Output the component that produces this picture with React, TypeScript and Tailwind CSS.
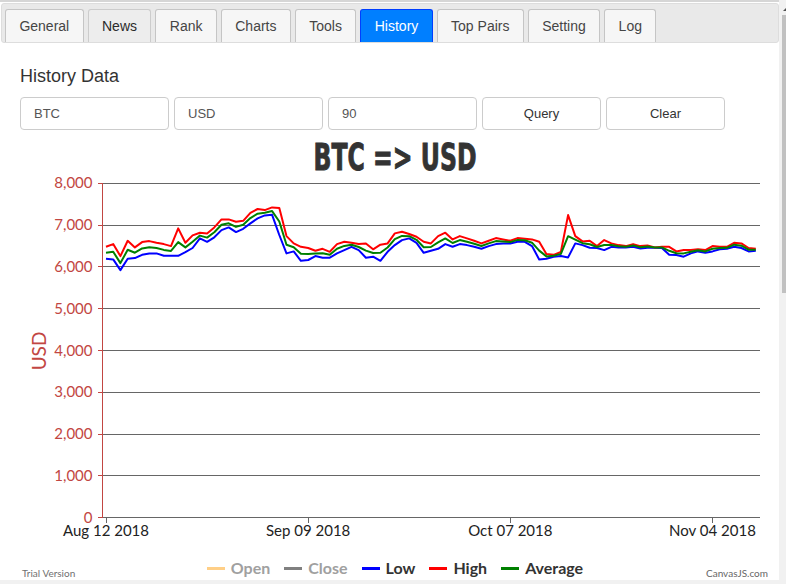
import React from "react";

const TABS = ["General", "News", "Rank", "Charts", "Tools", "History", "Top Pairs", "Setting", "Log"];
const ACTIVE = "History";
const HOVER = "News";

// daily high / low for the last 90 days (91 points)
const HIGH = [
  6482, 6546, 6259, 6625, 6467, 6594, 6618, 6577, 6546, 6498,
  6922, 6577, 6754, 6817, 6802, 6946, 7137, 7137, 7080, 7104,
  7295, 7384, 7360, 7424, 7407, 6738, 6563, 6482, 6451, 6386,
  6434, 6362, 6546, 6601, 6577, 6546, 6563, 6420,
  6530, 6563, 6802, 6841, 6786, 6721, 6601, 6563, 6738, 6817,
  6659, 6738, 6683, 6625, 6563, 6625, 6690, 6659, 6625, 6690,
  6673, 6659, 6601, 6307, 6290, 6362, 7240, 6738, 6611, 6625,
  6498, 6642, 6563, 6522, 6498, 6546, 6498, 6515, 6467, 6482,
  6482, 6371, 6403, 6403, 6420, 6403, 6498, 6482, 6482, 6577,
  6563, 6451, 6434,
];
const LOW = [
  6195, 6180, 5924, 6195, 6211, 6290, 6324, 6324, 6266, 6266,
  6266, 6355, 6451, 6683, 6601, 6707, 6881, 6946, 6833, 6912,
  7041, 7161, 7233, 7247, 6762, 6324, 6372, 6147, 6164, 6259,
  6219, 6219, 6324, 6403, 6482, 6403, 6219, 6243,
  6147, 6362, 6522, 6642, 6683, 6577, 6338, 6386, 6434, 6546,
  6482, 6546, 6522, 6482, 6434, 6498, 6546, 6563, 6563, 6601,
  6601, 6498, 6180, 6195, 6243, 6259, 6228, 6563, 6522, 6458,
  6451, 6403, 6482, 6467, 6467, 6482, 6443, 6458, 6458, 6451,
  6290, 6283, 6243, 6324, 6372, 6338, 6372, 6420, 6434, 6482,
  6451, 6372, 6386,
];
const AVG = HIGH.map((h, i) => Math.round((h + LOW[i]) / 2));

const X0 = 86;
const DX = 7.22;
const LEFT = 82.5;
const RIGHT = 740;
const gy = (v: number) => 381.7 - v * 0.0418;
const px = (i: number) => X0 + i * DX;
const linePath = (vals: number[]) =>
  vals.map((v, i) => `${i ? "L" : "M"}${px(i).toFixed(1)} ${gy(v).toFixed(1)}`).join(" ");

const Y_TICKS = [0, 1000, 2000, 3000, 4000, 5000, 6000, 7000, 8000];
const X_TICKS = [
  { i: 0, label: "Aug 12 2018" },
  { i: 28, label: "Sep 09 2018" },
  { i: 56, label: "Oct 07 2018" },
  { i: 84, label: "Nov 04 2018" },
];

const LEGEND = [
  { name: "Open", color: "#ffcf87", on: false },
  { name: "Close", color: "#808080", on: false },
  { name: "Low", color: "#0000ff", on: true },
  { name: "High", color: "#ff0000", on: true },
  { name: "Average", color: "#008000", on: true },
];

const AXIS_RED = "#c24642";
const CHART_FONT = "Lato, 'Open Sans', sans-serif";

function Tab({ label }: { label: string }) {
  const active = label === ACTIVE;
  const hover = label === HOVER;
  const cls = active
    ? "bg-[#007fff] border-[#003eff] text-white"
    : hover
    ? "bg-[#ededed] border-[#cccccc] text-[#2b2b2b]"
    : "bg-[#f6f6f6] border-[#c5c5c5] text-[#454545]";
  return (
    <div className={`h-[33px] px-[13.4px] flex items-center border border-b-0 rounded-t-[3px] text-[14px] ${cls}`}>
      {label}
    </div>
  );
}

function HistoryChart() {
  return (
    <div className="w-[750px] flex flex-col">
      <svg width={750} height={414} className="block">
        <text
          x={375}
          y={34}
          textAnchor="middle"
          fontFamily="'DejaVu Sans Condensed', 'DejaVu Sans', sans-serif"
          fontWeight="bold"
          fontSize={37}
          fill="#333333"
          stroke="#333333"
          strokeWidth={0.9}
          textLength={163}
          lengthAdjust="spacingAndGlyphs"
        >
          {"BTC => USD"}
        </text>

        {/* grid + y axis */}
        {Y_TICKS.map((v) => (
          <g key={v} shapeRendering="crispEdges">
            <line x1={LEFT} x2={RIGHT} y1={gy(v)} y2={gy(v)} stroke="#666666" strokeWidth={1} />
            <line x1={77.5} x2={LEFT} y1={gy(v)} y2={gy(v)} stroke={AXIS_RED} strokeWidth={1} />
            <text
              x={72.5}
              y={gy(v) + 5}
              textAnchor="end"
              fontFamily={CHART_FONT}
              fontSize={15}
              fill={AXIS_RED}
            >
              {v.toLocaleString("en-US")}
            </text>
          </g>
        ))}
        <line
          x1={LEFT}
          x2={LEFT}
          y1={gy(8000)}
          y2={gy(0)}
          stroke={AXIS_RED}
          strokeWidth={1}
          shapeRendering="crispEdges"
        />
        <text
          transform="translate(26 215) rotate(-90)"
          textAnchor="middle"
          fontFamily={CHART_FONT}
          fontSize={19}
          fill={AXIS_RED}
        >
          USD
        </text>

        {/* x axis */}
        {X_TICKS.map((t) => (
          <g key={t.i}>
            <line
              x1={px(t.i)}
              x2={px(t.i)}
              y1={gy(0)}
              y2={gy(0) + 5}
              stroke="#666666"
              strokeWidth={1}
              shapeRendering="crispEdges"
            />
            <text x={px(t.i)} y={400} textAnchor="middle" fontFamily={CHART_FONT} fontSize={15} fill="#222222">
              {t.label}
            </text>
          </g>
        ))}

        <path d={linePath(LOW)} fill="none" stroke="#0000ff" strokeWidth={2} strokeLinejoin="round" />
        <path d={linePath(HIGH)} fill="none" stroke="#ff0000" strokeWidth={2} strokeLinejoin="round" />
        <path d={linePath(AVG)} fill="none" stroke="#008000" strokeWidth={2} strokeLinejoin="round" />
      </svg>

      <div className="h-[30px] grid grid-cols-[1fr_auto_1fr]" style={{ fontFamily: CHART_FONT }}>
        <div className="pt-[17px] pl-[2px] text-[10px] leading-[12px] text-[#707070]">Trial Version</div>
        <div className="pt-[8px] flex gap-[14px]">
          {LEGEND.map((l) => (
            <div key={l.name} className="flex items-center gap-[6px] h-[20px]">
              <span className="w-[18px] h-[3px]" style={{ backgroundColor: l.color }} />
              <span className={`text-[16px] font-bold leading-[20px] ${l.on ? "text-[#333333]" : "text-[#a0a0a0]"}`}>
                {l.name}
              </span>
            </div>
          ))}
        </div>
        <div className="pt-[17px] pr-[2px] text-right text-[10px] leading-[12px] text-[#666666]">CanvasJS.com</div>
      </div>
    </div>
  );
}

export default function App() {
  return (
    <div className="flex w-[786px] h-[584px] overflow-hidden bg-white font-['Liberation_Sans',Arial,sans-serif]">
      <div className="flex flex-col w-[779px]">
        <div className="h-[2px] bg-[#d6d6d6]" />
        <div className="mt-px ml-px w-[778px] h-[40px] border border-[#dddddd] bg-[#e9e9e9] rounded-[3px] flex items-end gap-[4px] pl-[3px]">
          {TABS.map((t) => (
            <Tab key={t} label={t} />
          ))}
        </div>

        <div className="flex-1 pl-[20px]">
          <div className="mt-[23px] text-[18px] leading-[20px] text-[#333333]">History Data</div>

          <div className="mt-[11px] flex gap-[5px] h-[33px] text-[13px]">
            {["BTC", "USD", "90"].map((v) => (
              <input
                key={v}
                readOnly
                value={v}
                className="w-[149px] h-[33px] px-[13px] border border-[#cccccc] rounded-[4px] text-[#555555] outline-none"
              />
            ))}
            {["Query", "Clear"].map((b) => (
              <button
                key={b}
                className="w-[119px] h-[33px] border border-[#cccccc] rounded-[4px] bg-white text-[#333333]"
              >
                {b}
              </button>
            ))}
          </div>

          <div className="mt-[6px]">
            <HistoryChart />
          </div>
        </div>

        <div className="h-[4px] bg-[#f1f1f1]" />
      </div>

      {/* window scrollbar, mostly cut off */}
      <div className="w-[7px] bg-[#f1f1f1] flex flex-col">
        <svg width={7} height={15} className="block">
          <polygon points="4,11 7,8 7,11" fill="#505050" />
        </svg>
        <div className="ml-[3px] w-[4px] h-[278px] bg-[#c1c1c1]" />
      </div>
    </div>
  );
}
